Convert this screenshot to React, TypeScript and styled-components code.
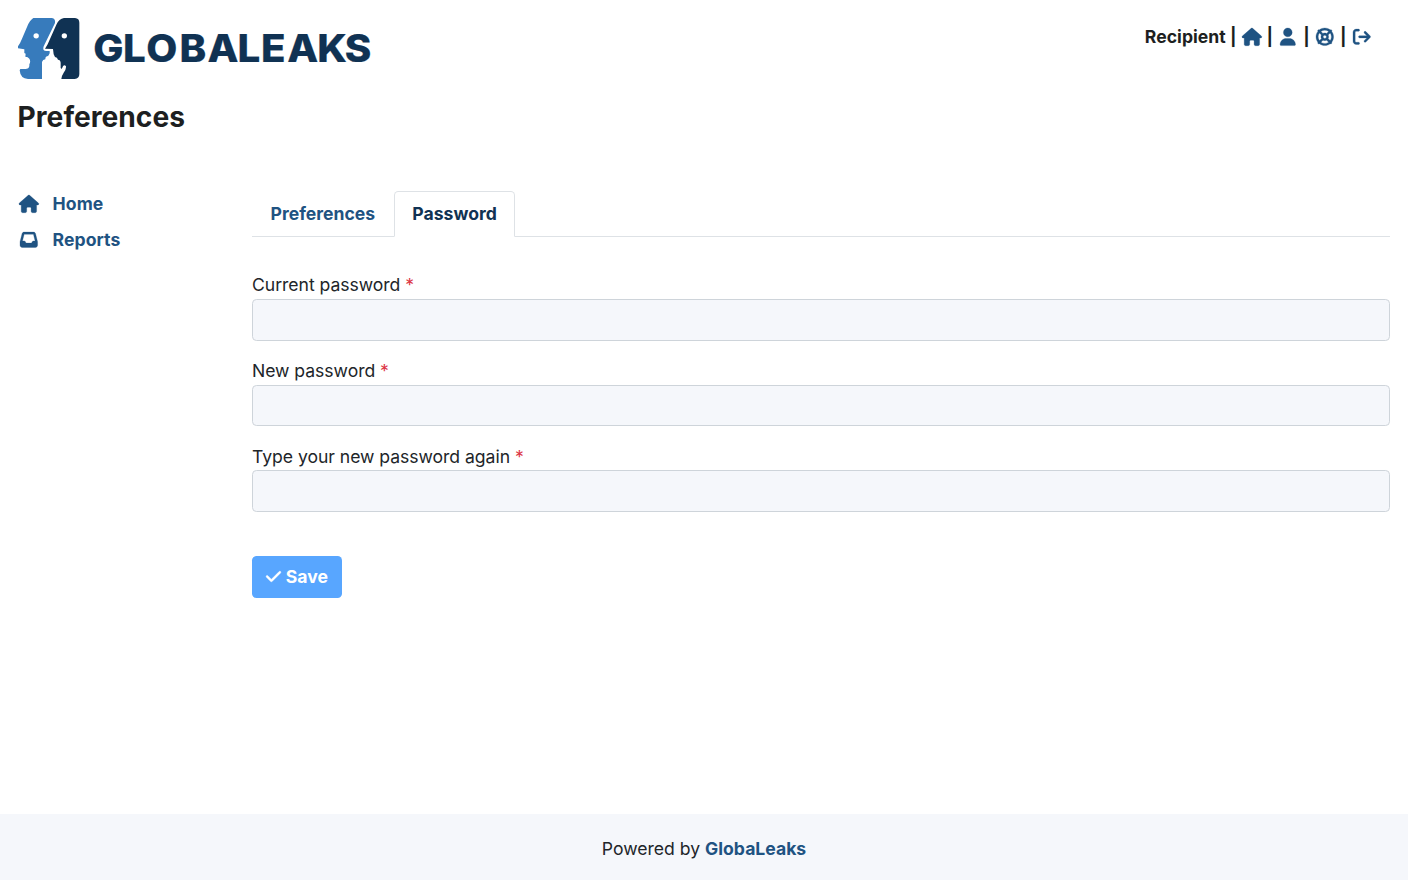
import React from 'react';
import styled, { createGlobalStyle } from 'styled-components';
import { FaHouse, FaUser, FaLifeRing, FaArrowRightFromBracket, FaInbox, FaCheck } from 'react-icons/fa6';

const GlobalStyle = createGlobalStyle`
  html { font-size: 17.6px; }
  *, *::before, *::after { box-sizing: border-box; }
  body { margin: 0; background: #fff; color: #212529; font-family: Inter, "Liberation Sans", sans-serif; line-height: 1.5; }
`;

const Page = styled.div`
  min-height: 100vh;
  display: flex;
  flex-direction: column;
`;

const Header = styled.header`
  display: flex;
  justify-content: space-between;
  align-items: flex-start;
  padding: 1rem 1rem 0;
  height: 97px;
`;

const Brand = styled.svg`
  display: block;
  flex: none;
`;

const Wordmark = styled.text`
  font-family: Inter, sans-serif;
  font-weight: 800;
  font-size: 37.6px;
  fill: #103253;
  stroke: #103253;
  stroke-width: 0.2px;
`;

const UserBar = styled.nav`
  display: flex;
  align-items: center;
  height: 26.4px;
  margin-top: 6.2px;
  padding-right: 17.8px;
  color: #1d1f21;
  font-weight: 700;
`;

const UserName = styled.span`
  letter-spacing: 0.04px;
`;

const Divider = styled.span`
  width: 14.7px;
  text-align: center;
`;

const IconLink = styled.a`
  display: inline-flex;
  align-items: center;
  justify-content: center;
  width: 1.25rem;
  color: #1f5382;

  svg {
    overflow: visible;
    stroke: currentColor;
    stroke-width: 8px;
  }
`;

const Title = styled.h1`
  margin: 0 0 0 1rem;
  height: 76px;
  color: #1d1f21;
  font-size: 28.16px;
  line-height: 40px;
  font-weight: 700;
`;

const Main = styled.main`
  flex: 1;
  display: flex;
  padding: 18px 18px 0 17.6px;
`;

const Sidebar = styled.nav`
  width: 234.4px;
  flex: none;
`;

const SideLink = styled.a`
  display: flex;
  align-items: center;
  gap: 13px;
  height: 26.4px;
  margin-bottom: 9.2px;
  color: #1f5382;
  font-weight: 700;
  letter-spacing: 0.06px;
`;

const Content = styled.section`
  flex: 1;
`;

const Tabs = styled.div`
  display: flex;
  height: 46px;
  border-bottom: 1px solid #dee2e6;
`;

const Tab = styled.button<{ $active?: boolean }>`
  height: 46px;
  padding: 0 17.6px 2px;
  border: 1px solid ${p => (p.$active ? '#dee2e6' : 'transparent')};
  border-bottom-color: ${p => (p.$active ? '#fff' : 'transparent')};
  border-radius: 4.4px 4.4px 0 0;
  background: ${p => (p.$active ? '#fff' : 'transparent')};
  color: ${p => (p.$active ? '#103253' : '#1f5382')};
  font: 700 1rem Inter, sans-serif;
`;

const Form = styled.form`
  padding-top: 35.2px;
`;

const Field = styled.label`
  display: block;
  height: 85.75px;
  letter-spacing: -0.04px;
`;

const Required = styled.span`
  color: #dc3545;
`;

const Input = styled.input`
  display: block;
  width: 100%;
  height: 41.65px;
  margin: 0.3px 0 0;
  border: 1px solid #ced4da;
  border-radius: 4.4px;
  background: #f5f7fb;
`;

const SaveButton = styled.button`
  display: flex;
  align-items: center;
  gap: 3.4px;
  height: 42px;
  width: 90px;
  margin-top: 26.9px;
  padding: 0 0 2px 13.4px;
  border: 0;
  border-radius: 4.4px;
  background: #58a6ff;
  color: #fff;
  font: 700 1rem Inter, sans-serif;

  svg {
    overflow: visible;
    stroke: currentColor;
    stroke-width: 10px;
    margin-top: 1px;
  }
`;

const Footer = styled.footer`
  display: flex;
  align-items: center;
  justify-content: center;
  gap: 5px;
  height: 66px;
  padding-top: 5px;
  background: #f5f7fb;
`;

const FooterLink = styled.a`
  color: #1f5382;
  font-weight: 700;
`;

const Logo = () => (
  <Brand width="360" height="62" viewBox="18 18 360 62" role="img" aria-label="GlobaLeaks">
    <g transform="translate(10 10) scale(.33333)">
      <path
        fill="#377bbc"
        d="M70 24H124Q137 25 135 39L103 105Q98 113 101 120Q103 123 109 123H119V130L115 137L108 140Q106 142 106 148Q98 149 96 156V207H54Q31 206 29 181L31 177H46Q57 177 58 168V163Q63 154 58 146Q54 140 46 140L47 131L43 129V118L24 115V109Q31 99 36 86L52 49Q59 31 70 24Z"
      />
      <path
        fill="#103253"
        d="M162 24H195Q208 25 208 38V192Q208 206 194 207H154Q155 197 161 188Q169 177 168 169Q163 163 159 169L155 177L152 174V158Q151 149 144 149Q142 141 135 141L131 133L129 117L105 116L113 103L139 44Q147 26 162 24Z"
      />
      <circle cx="78.500" cy="77.500" r="8" fill="#fff" />
      <circle cx="163" cy="77.500" r="8" fill="#fff" />
    </g>
    <Wordmark transform="scale(1.07 1)" x="87.200 114.900 136.700 167.800 193.900 221.900 244 268.400 296.600 322.300" y="61.600">GLOBALEAKS</Wordmark>
  </Brand>
);

const fields = ['Current password', 'New password', 'Type your new password again'];

export default function App() {
  return (
    <Page>
      <GlobalStyle />
      <Header>
        <Logo />
        <UserBar>
          <UserName>Recipient</UserName>
          <Divider>|</Divider>
          <IconLink><FaHouse size={19.8} /></IconLink>
          <Divider>|</Divider>
          <IconLink><FaUser size={17.6} /></IconLink>
          <Divider>|</Divider>
          <IconLink><FaLifeRing size={17.6} /></IconLink>
          <Divider>|</Divider>
          <IconLink><FaArrowRightFromBracket size={17.6} /></IconLink>
        </UserBar>
      </Header>
      <Title>Preferences</Title>
      <Main>
        <Sidebar>
          <SideLink><IconLink as="span"><FaHouse size={19.8} /></IconLink>Home</SideLink>
          <SideLink><IconLink as="span"><FaInbox size={17.6} /></IconLink>Reports</SideLink>
        </Sidebar>
        <Content>
          <Tabs>
            <Tab>Preferences</Tab>
            <Tab $active>Password</Tab>
          </Tabs>
          <Form>
            {fields.map(label => (
              <Field key={label}>
                {label} <Required>*</Required>
                <Input type="password" />
              </Field>
            ))}
            <SaveButton type="button"><FaCheck size={17} />Save</SaveButton>
          </Form>
        </Content>
      </Main>
      <Footer>
        <span>Powered by</span>
        <FooterLink>GlobaLeaks</FooterLink>
      </Footer>
    </Page>
  );
}
